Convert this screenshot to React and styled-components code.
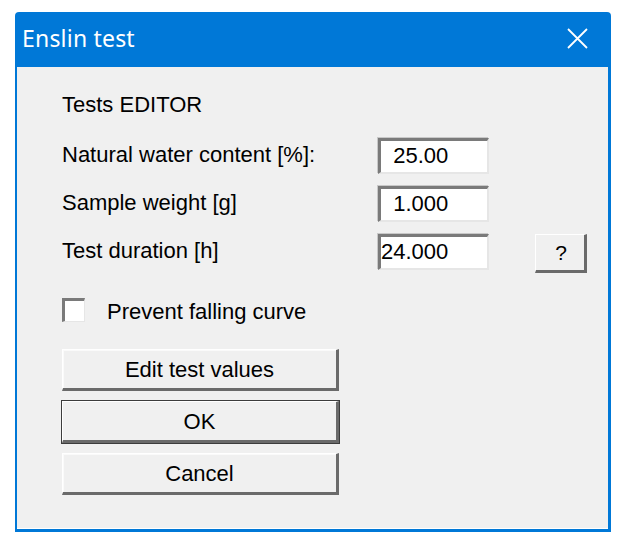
import React from "react";
import styled, { createGlobalStyle } from "styled-components";

const Global = createGlobalStyle`
  html, body { margin: 0; padding: 0; background: #ffffff; }
  body { font-family: "Liberation Sans", Arial, sans-serif; }
`;

const Page = styled.div`
  padding: 12px 0 0 15px;
`;

const Window = styled.div`
  width: 596px;
  height: 520px;
  box-sizing: border-box;
  background: #0078d7;
  border-radius: 4px 4px 0 0;
  padding: 0 3px 3px 2px;
  display: flex;
  flex-direction: column;
`;

const TitleBar = styled.div`
  height: 55px;
  flex: none;
  display: flex;
  align-items: center;
  justify-content: space-between;
  padding: 0 20px 0 5px;
  color: #ffffff;
`;

const Title = styled.div`
  font-family: "Noto Sans", "Open Sans", sans-serif;
  font-size: 23px;
  letter-spacing: 0.2px;
  line-height: 26px;
  margin-top: -3px;
`;

const CloseIcon = styled.svg`
  width: 21px;
  height: 21px;
  margin-top: -2px;
`;

const Client = styled.div`
  flex: 1;
  background: #f0f0f0;
  padding: 26px 0 0 45px;
  display: flex;
  flex-direction: column;
  color: #000;
  font-size: 22px;
  box-shadow: inset 0 -1px 0 #ffffff;
`;

const Heading = styled.div`
  line-height: 24px;
  height: 24px;
`;

const Form = styled.div`
  margin-top: 21px;
  display: grid;
  grid-template-columns: 316px 111px 46px 52px;
  grid-auto-rows: 37px;
  row-gap: 11px;
  align-items: center;
`;

const Label = styled.div`
  grid-column: 1;
  line-height: 24px;
  margin-top: -3px;
`;

const Edit = styled.div`
  grid-column: 2;
  height: 36px;
  box-sizing: border-box;
  background: #ffffff;
  border-style: solid;
  border-width: 3px 2px 2px 3px;
  border-color: #7a7a7a #e6e6e6 #e6e6e6 #7a7a7a;
  box-shadow: -1px -1px 0 #c8c8c8;
  padding: 0;
  white-space: pre;
  line-height: 30px;
  align-self: start;
`;

const HelpButton = styled.div`
  grid-column: 4;
  height: 39px;
  align-self: start;
  box-sizing: border-box;
  background: #f0f0f0;
  border-style: solid;
  border-width: 1px 3px 3px 1px;
  border-color: #ffffff #6a6a6a #6a6a6a #ffffff;
  display: flex;
  align-items: center;
  justify-content: center;
  font-size: 21px;
  padding-left: 2px;
`;

const CheckRow = styled.label`
  margin-top: 26px;
  display: flex;
  align-items: center;
  gap: 22px;
  height: 25px;
`;

const CheckBox = styled.span`
  width: 23px;
  height: 24px;
  box-sizing: border-box;
  background: #ffffff;
  border-style: solid;
  border-width: 3px 1px 1px 3px;
  border-color: #7a7a7a #e6e6e6 #e6e6e6 #7a7a7a;
`;

const CheckText = styled.span`
  line-height: 24px;
  margin-top: 4px;
`;

const Buttons = styled.div`
  margin-top: 27px;
  display: flex;
  flex-direction: column;
  gap: 10px;
  width: 277px;
`;

const PushButton = styled.div`
  height: 42px;
  box-sizing: border-box;
  background: #f0f0f0;
  border-style: solid;
  border-width: 1px 3px 3px 1px;
  border-color: #ffffff #6a6a6a #6a6a6a #ffffff;
  box-shadow: ${(p) => (p.$default ? "0 0 0 1px #3c3c3c" : "inset 1px 1px 0 #fafafa")};
  display: flex;
  align-items: center;
  justify-content: center;
  line-height: 24px;
  padding-top: 1px;
`;

export default function App() {
  return (
    <>
      <Global />
      <Page>
        <Window>
          <TitleBar>
            <Title>Enslin test</Title>
            <CloseIcon viewBox="0 0 21 21">
              <path d="M1 1 L20 20 M20 1 L1 20" stroke="#ffffff" strokeWidth="1.8" fill="none" />
            </CloseIcon>
          </TitleBar>
          <Client>
            <Heading>Tests EDITOR</Heading>
            <Form>
              <Label>Natural water content [%]:</Label>
              <Edit>{"  25.00"}</Edit>
              <Label>Sample weight [g]</Label>
              <Edit>{"  1.000"}</Edit>
              <Label>Test duration [h]</Label>
              <Edit>24.000</Edit>
              <HelpButton>?</HelpButton>
            </Form>
            <CheckRow>
              <CheckBox />
              <CheckText>Prevent falling curve</CheckText>
            </CheckRow>
            <Buttons>
              <PushButton>Edit test values</PushButton>
              <PushButton $default>OK</PushButton>
              <PushButton>Cancel</PushButton>
            </Buttons>
          </Client>
        </Window>
      </Page>
    </>
  );
}
